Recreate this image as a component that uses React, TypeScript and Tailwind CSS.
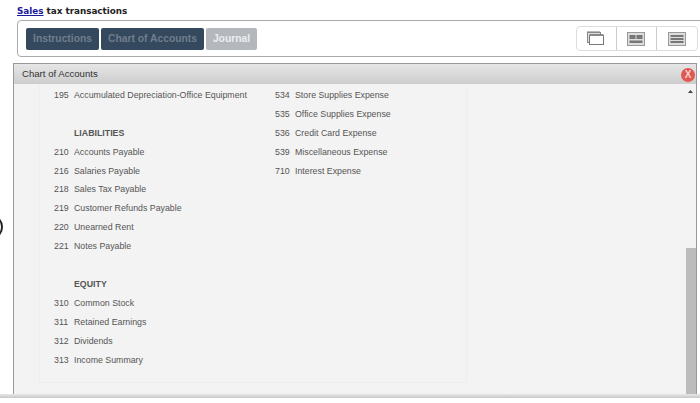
const left: [string, string][] = [
  ["195", "Accumulated Depreciation-Office Equipment"],
  ["", ""],
  ["", "LIABILITIES"],
  ["210", "Accounts Payable"],
  ["216", "Salaries Payable"],
  ["218", "Sales Tax Payable"],
  ["219", "Customer Refunds Payable"],
  ["220", "Unearned Rent"],
  ["221", "Notes Payable"],
  ["", ""],
  ["", "EQUITY"],
  ["310", "Common Stock"],
  ["311", "Retained Earnings"],
  ["312", "Dividends"],
  ["313", "Income Summary"],
];
const right: [string, string][] = [
  ["534", "Store Supplies Expense"],
  ["535", "Office Supplies Expense"],
  ["536", "Credit Card Expense"],
  ["539", "Miscellaneous Expense"],
  ["710", "Interest Expense"],
];

function Row({ code, name }: { code: string; name: string }) {
  const heading = !code && name;
  return (
    <div className="flex h-[18.93px] items-center whitespace-nowrap">
      <span className="w-[20px] text-[#555]">{code}</span>
      <span className={heading ? "font-bold text-[#555]" : "text-[#555]"}>{name}</span>
    </div>
  );
}

export default function App() {
  return (
    <div className="relative h-[403px] w-[700px] overflow-hidden bg-white font-['Liberation_Sans',sans-serif]">
      <div className="absolute left-[-23px] top-[214px] h-[26px] w-[26px] rounded-full border-2 border-[#222]" />
      <div className="pl-[17px] pt-[4px] font-['DejaVu_Sans',sans-serif] text-[8.8px] font-bold leading-[14px] text-[#222]">
        <a className="text-[#1a1a9c] underline">Sales</a> tax transactions
      </div>
      <div className="ml-[17px] mt-[2px] flex h-[37px] w-[690px] items-center rounded-[4px] border border-[#aaa] pl-[8px]">
        <div className="mt-[1px] flex gap-[2px] text-[10.3px] font-bold">
          <div className="flex h-[22px] w-[73px] items-center justify-center rounded-[2px] bg-[#34495e] text-[#6f7d8d]">Instructions</div>
          <div className="flex h-[22px] w-[103px] items-center justify-center rounded-[2px] bg-[#34495e] text-[#6f7d8d]">Chart of Accounts</div>
          <div className="flex h-[22px] w-[51px] items-center justify-center rounded-[2px] bg-[#b4b8bd] text-[#eceef0]">Journal</div>
        </div>
        <div className="ml-[319px] flex h-[25px] w-[122px] rounded-[4px] border border-[#ddd]">
          <div className="flex w-[40px] items-center justify-center border-r border-[#ccc]">
            <svg className="mr-[3px] mt-[-2px]" width="18" height="14" viewBox="0 0 18 14">
              <rect x="1" y="0.5" width="13" height="3" fill="#777" />
              <rect x="1.5" y="1.5" width="13" height="10" fill="#ddd" stroke="#888" />
              <rect x="3.5" y="4.5" width="14" height="9" fill="#fff" stroke="#777" />
              <rect x="3.5" y="3" width="14" height="2" fill="#888" />
            </svg>
          </div>
          <div className="flex w-[40px] items-center justify-center border-r border-[#ccc]">
            <svg className="mr-[1px]" width="18" height="14" viewBox="0 0 18 14">
              <rect x="0.5" y="0.5" width="17" height="13" fill="#ddd" stroke="#999" />
              <rect x="2.5" y="3" width="6" height="4" fill="#777" />
              <rect x="9.5" y="3" width="6" height="4" fill="#777" />
              <rect x="2.5" y="8.5" width="13" height="2.5" fill="#777" />
            </svg>
          </div>
          <div className="flex flex-1 items-center justify-center">
            <svg className="mr-[1px]" width="18" height="14" viewBox="0 0 18 14">
              <rect x="0.5" y="0.5" width="17" height="13" fill="#ddd" stroke="#999" />
              <rect x="2.5" y="3" width="13" height="2" fill="#777" />
              <rect x="2.5" y="6" width="13" height="2" fill="#777" />
              <rect x="2.5" y="9" width="13" height="2" fill="#777" />
            </svg>
          </div>
        </div>
      </div>
      <div className="ml-[13px] mt-[6px] flex h-[331px] w-[684px] flex-col border-x border-t border-[#999]">
        <div className="flex h-[20px] shrink-0 items-center justify-between bg-gradient-to-b from-[#e6e6e6] to-[#cdcdcd] pl-[8px] pr-[1px] pt-[1px] text-[9.6px] text-[#333]">
          <span>Chart of Accounts</span>
          <span className="flex h-[14px] w-[14px] items-center justify-center rounded-full bg-[#e2584f] text-[10px] font-bold leading-none text-[#f6d5d2]">X</span>
        </div>
        <div className="flex min-h-0 flex-1 bg-[#f3f3f3]">
          <div className="flex-1 pl-[25px]">
            <div className="flex h-[299px] w-[428px] border-x border-b border-[#eeeef0] pl-[14px] pt-[2px] text-[8.8px]">
              <div className="w-[221px]">
                {left.map((r, i) => <Row key={i} code={r[0]} name={r[1]} />)}
              </div>
              <div>
                {right.map((r, i) => <Row key={i} code={r[0]} name={r[1]} />)}
              </div>
            </div>
          </div>
          <div className="relative flex w-[10px] flex-col justify-end">
            <svg className="absolute left-[2px] top-[6px]" width="5" height="3" viewBox="0 0 5 3"><path d="M0 3 L2.5 0 L5 3 Z" fill="#444" /></svg>
            <div className="h-[146px] bg-[#bcbcbc]" />
          </div>
        </div>
      </div>
      <div className="h-[4px] bg-gradient-to-b from-[#e8e8e8] to-[#c8c8c8]" />
    </div>
  );
}
